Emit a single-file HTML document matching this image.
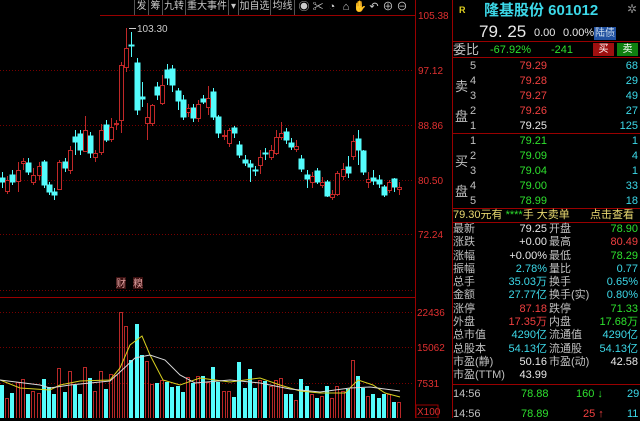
<!DOCTYPE html>
<html><head><meta charset="utf-8"><style>
*{margin:0;padding:0;box-sizing:border-box}
body{width:640px;height:418px;background:#000;overflow:hidden;position:relative;font-family:"Liberation Sans","Noto Sans CJK SC",sans-serif;font-size:12px;color:#c0c0c0}
.a{position:absolute;white-space:nowrap;line-height:13px}
.r{text-align:right}
.cy{color:#3cd8e8}.gr{color:#2ee02e}.rd{color:#f04040}.wh{color:#e8e8e8}.gy{color:#c0c0c0}
.tb{position:absolute;top:0;height:15px;line-height:14px;font-size:10px;color:#c8c8c8;border-right:1px solid #555;text-align:center;overflow:hidden}
.ic{position:absolute;top:1px;width:14px;text-align:center;font-size:11px;color:#ccc;line-height:13px}
</style></head><body>
<svg width="640" height="418" style="position:absolute;left:0;top:0">
<g stroke="#700" stroke-width="1" stroke-dasharray="1,2">
<line x1="0" y1="70.5" x2="414" y2="70.5"/><line x1="0" y1="125.5" x2="414" y2="125.5"/><line x1="0" y1="180.5" x2="414" y2="180.5"/><line x1="0" y1="234.5" x2="414" y2="234.5"/><line x1="0" y1="290.5" x2="414" y2="290.5"/>
<line x1="0" y1="312.5" x2="414" y2="312.5"/><line x1="0" y1="347.5" x2="414" y2="347.5"/><line x1="0" y1="383.5" x2="414" y2="383.5"/>
</g>
<line x1="0" y1="297.5" x2="415" y2="297.5" stroke="#900"/>
<line x1="100" y1="15.5" x2="415" y2="15.5" stroke="#900"/>
<line x1="415.5" y1="0" x2="415.5" y2="418" stroke="#900"/>
<line x1="452.5" y1="0" x2="452.5" y2="418" stroke="#900"/>
<g font-size="10" fill="#e03030" font-family="Liberation Sans">
<text x="418" y="19">105.38</text><text x="418" y="74">97.12</text><text x="418" y="129">88.86</text><text x="418" y="184">80.50</text><text x="418" y="238">72.24</text>
<text x="417" y="316">22436</text><text x="417" y="351">15062</text><text x="417" y="387">7531</text><text x="417" y="415">X100</text>
</g>
<rect x="416" y="405" width="22" height="13" fill="none" stroke="#900"/>
<line x1="129" y1="28.5" x2="136" y2="28.5" stroke="#ccc"/>
<text x="137" y="32" font-size="10" fill="#ccc" font-family="Liberation Sans">103.30</text>
<g stroke="#54fcfc" fill="#54fcfc">
<path d="M2.5 172V188M12.5 170V185M28.5 158V175M44.5 160V188M49.5 182V195M54.5 188V200M65.5 158V172M75.5 130V155M80.5 130V155M90.5 132V158M106.5 120V142M131.5 32V57M137.5 58V115M142.5 82V107M157.5 82V100M167.5 64V85M172.5 65V92M178.5 88V110M183.5 95V120M193.5 104V122M203.5 95V104M213.5 88V120M218.5 115V138M234.5 126V138M239.5 141V158M245.5 155V166M250.5 160V182M255.5 166V176M265.5 148V160M286.5 128V144M291.5 138V150M301.5 155V172M307.5 170V188M317.5 168V184M327.5 180V197M348.5 156V178M358.5 130V165M363.5 150V175M373.5 170V185M379.5 175V188M384.5 185V197M394.5 178V192" fill="none"/>
<rect x="0" y="178" width="5" height="4"/><rect x="10" y="175" width="5" height="7"/><rect x="26" y="163" width="5" height="9"/><rect x="42" y="162" width="5" height="23"/><rect x="47" y="185" width="5" height="7"/><rect x="52" y="192" width="5" height="3"/><rect x="63" y="162" width="5" height="6"/><rect x="73" y="137" width="5" height="5"/><rect x="78" y="134" width="5" height="16"/><rect x="88" y="136" width="5" height="17"/><rect x="104" y="125" width="5" height="15"/><rect x="129" y="45" width="5" height="1"/><rect x="135" y="63" width="5" height="47"/><rect x="140" y="97" width="5" height="2"/><rect x="155" y="87" width="5" height="8"/><rect x="165" y="70" width="5" height="8"/><rect x="170" y="69" width="5" height="16"/><rect x="176" y="91" width="5" height="10"/><rect x="181" y="100" width="5" height="17"/><rect x="191" y="108" width="5" height="10"/><rect x="201" y="99" width="5" height="3"/><rect x="211" y="92" width="5" height="25"/><rect x="216" y="117" width="5" height="16"/><rect x="232" y="128" width="5" height="5"/><rect x="237" y="145" width="5" height="10"/><rect x="243" y="160" width="5" height="3"/><rect x="248" y="164" width="5" height="3"/><rect x="253" y="170" width="5" height="1"/><rect x="263" y="153" width="5" height="1"/><rect x="284" y="132" width="5" height="8"/><rect x="289" y="143" width="5" height="4"/><rect x="299" y="159" width="5" height="10"/><rect x="305" y="175" width="5" height="4"/><rect x="315" y="171" width="5" height="11"/><rect x="325" y="182" width="5" height="14"/><rect x="346" y="167" width="5" height="6"/><rect x="356" y="139" width="5" height="11"/><rect x="361" y="151" width="5" height="21"/><rect x="371" y="178" width="5" height="3"/><rect x="377" y="180" width="5" height="4"/><rect x="382" y="187" width="5" height="8"/><rect x="392" y="179" width="5" height="8"/>
</g>
<g stroke="#c02828" fill="#000">
<path d="M7.5 176V194M18.5 162V192M23.5 158V170M33.5 168V185M39.5 162V180M59.5 160V190M70.5 146V174M85.5 116V152M95.5 150V162M101.5 124V155M111.5 118V142M116.5 120V130M121.5 62V133M126.5 28V72M147.5 103V140M152.5 104V126M162.5 75V105M188.5 104V117M198.5 100V122M208.5 86V115M224.5 130V140M229.5 128V147M260.5 150V174M271.5 145V160M276.5 130V155M281.5 122V140M296.5 140V152M312.5 172V188M322.5 177V188M332.5 190V200M337.5 171V196M343.5 163V180M353.5 135V160M368.5 172V188M389.5 180V193M399.5 182V195" fill="none"/>
<rect x="5.5" y="180.5" width="4" height="11"/><rect x="16.5" y="170.5" width="4" height="11"/><rect x="21.5" y="161.5" width="4" height="2"/><rect x="31.5" y="175.5" width="4" height="7"/><rect x="37.5" y="166.5" width="4" height="9"/><rect x="57.5" y="162.5" width="4" height="27"/><rect x="68.5" y="150.5" width="4" height="20"/><rect x="83.5" y="130.5" width="4" height="21"/><rect x="93.5" y="153.5" width="4" height="4"/><rect x="99.5" y="130.5" width="4" height="22"/><rect x="109.5" y="127.5" width="4" height="12"/><rect x="114.5" y="123.5" width="4" height="1"/><rect x="119.5" y="65.5" width="4" height="55"/><rect x="124.5" y="48.5" width="4" height="19"/><rect x="145.5" y="117.5" width="4" height="6"/><rect x="150.5" y="105.5" width="4" height="18"/><rect x="160.5" y="85.5" width="4" height="18"/><rect x="186.5" y="108.5" width="4" height="4"/><rect x="196.5" y="104.5" width="4" height="14"/><rect x="206.5" y="98.5" width="4" height="9"/><rect x="222.5" y="135.5" width="4" height="1"/><rect x="227.5" y="130.5" width="4" height="13"/><rect x="258.5" y="157.5" width="4" height="8"/><rect x="269.5" y="150.5" width="4" height="7"/><rect x="274.5" y="137.5" width="4" height="16"/><rect x="279.5" y="133.5" width="4" height="4"/><rect x="294.5" y="146.5" width="4" height="3"/><rect x="310.5" y="176.5" width="4" height="6"/><rect x="320.5" y="182.5" width="4" height="3"/><rect x="330.5" y="194.5" width="4" height="3"/><rect x="335.5" y="173.5" width="4" height="21"/><rect x="341.5" y="169.5" width="4" height="7"/><rect x="351.5" y="141.5" width="4" height="15"/><rect x="366.5" y="179.5" width="4" height="3"/><rect x="387.5" y="182.5" width="4" height="8"/><rect x="397.5" y="187.5" width="4" height="2"/>
</g>
<rect x="116" y="277" width="10" height="12" fill="#3a1010"/><rect x="133" y="277" width="10" height="12" fill="#3a1010"/>
<text x="116" y="287" font-size="10" fill="#e0a0a0" font-family="Noto Sans CJK SC">财</text><text x="133" y="287" font-size="10" fill="#e0a0a0" font-family="Noto Sans CJK SC">糗</text>
<g fill="#54fcfc">
<rect x="0" y="385" width="4" height="33"/><rect x="10" y="393" width="4" height="25"/><rect x="26" y="394" width="4" height="24"/><rect x="42" y="379" width="4" height="39"/><rect x="47" y="387" width="4" height="31"/><rect x="52" y="394" width="4" height="24"/><rect x="63" y="392" width="4" height="26"/><rect x="73" y="385" width="4" height="33"/><rect x="78" y="394" width="4" height="24"/><rect x="88" y="378" width="4" height="40"/><rect x="104" y="389" width="4" height="29"/><rect x="129" y="360" width="4" height="58"/><rect x="135" y="324" width="4" height="94"/><rect x="140" y="355" width="4" height="63"/><rect x="155" y="383" width="4" height="35"/><rect x="165" y="382" width="4" height="36"/><rect x="170" y="387" width="4" height="31"/><rect x="176" y="386" width="4" height="32"/><rect x="181" y="392" width="4" height="26"/><rect x="191" y="383" width="4" height="35"/><rect x="201" y="376" width="4" height="42"/><rect x="211" y="367" width="4" height="51"/><rect x="216" y="382" width="4" height="36"/><rect x="232" y="397" width="4" height="21"/><rect x="237" y="362" width="4" height="56"/><rect x="243" y="388" width="4" height="30"/><rect x="248" y="369" width="4" height="49"/><rect x="253" y="388" width="4" height="30"/><rect x="263" y="381" width="4" height="37"/><rect x="284" y="394" width="4" height="24"/><rect x="289" y="394" width="4" height="24"/><rect x="299" y="379" width="4" height="39"/><rect x="305" y="386" width="4" height="32"/><rect x="315" y="398" width="4" height="20"/><rect x="325" y="386" width="4" height="32"/><rect x="346" y="389" width="4" height="29"/><rect x="356" y="376" width="4" height="42"/><rect x="361" y="388" width="4" height="30"/><rect x="371" y="394" width="4" height="24"/><rect x="377" y="398" width="4" height="20"/><rect x="382" y="394" width="4" height="24"/><rect x="392" y="402" width="4" height="16"/>
</g>
<g stroke="#b82828" fill="none">
<rect x="5.5" y="398.5" width="3" height="20"/><rect x="16.5" y="382.5" width="3" height="36"/><rect x="21.5" y="379.5" width="3" height="39"/><rect x="31.5" y="391.5" width="3" height="27"/><rect x="37.5" y="393.5" width="3" height="25"/><rect x="57.5" y="368.5" width="3" height="50"/><rect x="68.5" y="371.5" width="3" height="47"/><rect x="83.5" y="367.5" width="3" height="51"/><rect x="93.5" y="391.5" width="3" height="27"/><rect x="99.5" y="371.5" width="3" height="47"/><rect x="109.5" y="374.5" width="3" height="44"/><rect x="114.5" y="375.5" width="3" height="43"/><rect x="119.5" y="312.5" width="3" height="106"/><rect x="124.5" y="326.5" width="3" height="92"/><rect x="145.5" y="361.5" width="3" height="57"/><rect x="150.5" y="384.5" width="3" height="34"/><rect x="160.5" y="380.5" width="3" height="38"/><rect x="186.5" y="377.5" width="3" height="41"/><rect x="196.5" y="376.5" width="3" height="42"/><rect x="206.5" y="382.5" width="3" height="36"/><rect x="222.5" y="391.5" width="3" height="27"/><rect x="227.5" y="391.5" width="3" height="27"/><rect x="258.5" y="380.5" width="3" height="38"/><rect x="269.5" y="386.5" width="3" height="32"/><rect x="274.5" y="380.5" width="3" height="38"/><rect x="279.5" y="378.5" width="3" height="40"/><rect x="294.5" y="400.5" width="3" height="18"/><rect x="310.5" y="394.5" width="3" height="24"/><rect x="320.5" y="396.5" width="3" height="22"/><rect x="330.5" y="398.5" width="3" height="20"/><rect x="335.5" y="386.5" width="3" height="32"/><rect x="341.5" y="391.5" width="3" height="27"/><rect x="351.5" y="360.5" width="3" height="58"/><rect x="366.5" y="396.5" width="3" height="22"/><rect x="387.5" y="394.5" width="3" height="24"/><rect x="397.5" y="402.5" width="3" height="16"/>
</g>
<polyline fill="none" stroke="#d8d020" stroke-width="1" points="0,380 20,388 50,390 60,385 80,381 110,380 120,368 130,345 142,336 150,355 163,380 180,385 200,378 230,382 245,380 260,378 280,385 300,391 320,393 345,393 358,380 373,385 385,393 400,397"/>
<polyline fill="none" stroke="#d8d8d8" stroke-width="1" points="0,380 40,385 50,388 70,385 110,381 120,372 135,358 150,355 165,360 180,375 195,383 230,380 260,383 290,389 320,392 350,388 370,387 400,391"/>
</svg>
<div class="tb" style="left:134px;width:15px;border-left:1px solid #555">发</div>
<div class="tb" style="left:149px;width:14px">筹</div>
<div class="tb" style="left:163px;width:23px">九转</div>
<div class="tb" style="left:186px;width:43px">重大事件</div>
<div class="tb" style="left:229px;width:10px">▾</div>
<div class="tb" style="left:239px;width:32px">加自选</div>
<div class="tb" style="left:271px;width:24px">均线</div>
<div class="ic" style="left:297px">◉</div>
<div class="ic" style="left:311px">✂</div>
<div class="ic" style="left:325px">◔</div>
<div class="ic" style="left:339px">⌂</div>
<div class="ic" style="left:353px">✋</div>
<div class="ic" style="left:367px">↶</div>
<div class="ic" style="left:381px">⊕</div>
<div class="ic" style="left:395px">⊖</div>
<div class="a" style="left:459px;top:4px;font-size:9px;color:#e0d020;font-weight:bold">R</div>
<div class="a cy" style="left:484px;top:2px;font-size:15px;line-height:17px;font-weight:bold">隆基股份 601012</div>
<div class="a" style="left:627px;top:3px;color:#888;font-size:12px">✲</div>
<div class="a wh" style="left:479px;top:22px;font-size:17px;line-height:19px">79. 25</div>
<div class="a wh" style="left:534px;top:27px;font-size:11px">0.00</div>
<div class="a wh" style="left:563px;top:27px;font-size:11px">0.00%</div>
<div class="a" style="left:594px;top:27px;font-size:10px;background:#2050a0;color:#cde;padding:0 1px">陆债</div>
<div style="position:absolute;left:453px;top:41px;width:187px;height:1px;background:#900"></div>
<div class="a gy" style="left:453px;top:43px;font-size:13px">委比</div>
<div class="a gr" style="left:490px;top:44px;font-size:11px">-67.92%</div>
<div class="a gr" style="left:551px;top:44px;font-size:11px">-241</div>
<div class="a" style="left:593px;top:43px;width:21px;height:13px;background:#a01010;color:#fff;font-size:10px;text-align:center">买</div>
<div class="a" style="left:617px;top:43px;width:21px;height:13px;background:#108010;color:#fff;font-size:10px;text-align:center">卖</div>
<div style="position:absolute;left:453px;top:57px;width:187px;height:1px;background:#900"></div>
<div class="a gy" style="left:455px;top:72px;font-size:13px;line-height:30px">卖<br>盘</div>
<div class="a gy" style="left:455px;top:147px;font-size:13px;line-height:30px">买<br>盘</div>
<div class="a gy" style="left:470px;top:59px;font-size:11px;line-height:15px">5<br>4<br>3<br>2<br>1</div>
<div class="a r" style="left:490px;top:59px;width:57px;font-size:11px;line-height:15px"><span class="rd">79.29<br>79.28<br>79.27<br>79.26</span><br><span class="wh">79.25</span></div>
<div class="a r cy" style="left:590px;top:59px;width:48px;font-size:11px;line-height:15px">68<br>29<br>49<br>27<br>125</div>
<div style="position:absolute;left:453px;top:133px;width:187px;height:1px;background:#900"></div>
<div class="a gy" style="left:470px;top:134px;font-size:11px;line-height:15px">1<br>2<br>3<br>4<br>5</div>
<div class="a r gr" style="left:490px;top:134px;width:57px;font-size:11px;line-height:15px">79.21<br>79.09<br>79.04<br>79.00<br>78.99</div>
<div class="a r cy" style="left:590px;top:134px;width:48px;font-size:11px;line-height:15px">1<br>4<br>1<br>33<br>18</div>
<div style="position:absolute;left:453px;top:208px;width:187px;height:1px;background:#900"></div>
<div class="a" style="left:453px;top:209px;font-size:11px;color:#e8d870">79.30元有 <span class="gr">****</span>手 大卖单</div>
<div class="a" style="left:590px;top:209px;font-size:11px;color:#e8d870">点击查看</div>
<div style="position:absolute;left:453px;top:222px;width:187px;height:1px;background:#900"></div>
<div class="a gy" style="left:453px;top:223px;font-size:11px;line-height:13.3px">最新<br>涨跌<br>涨幅<br>振幅<br>总手<br>金额<br>涨停<br>外盘<br>总市值<br>总股本<br>市盈(静)<br>市盈(TTM)</div>
<div class="a r" style="left:480px;top:223px;width:67px;font-size:11px;line-height:13.3px"><span class="wh">79.25<br>+0.00<br>+0.00%</span><br><span class="cy">2.78%<br>35.03万<br>27.77亿</span><br><span class="rd">87.18<br>17.35万</span><br><span class="cy">4290亿<br>54.13亿</span><br><span class="wh">50.16<br>43.99</span></div>
<div class="a gy" style="left:549px;top:223px;font-size:11px;line-height:13.3px">开盘<br>最高<br>最低<br>量比<br>换手<br>换手(实)<br>跌停<br>内盘<br>流通值<br>流通股<br>市盈(动)</div>
<div class="a r" style="left:580px;top:223px;width:58px;font-size:11px;line-height:13.3px"><span class="gr">78.90</span><br><span class="rd">80.49</span><br><span class="gr">78.29</span><br><span class="cy">0.77<br>0.65%<br>0.80%</span><br><span class="gr">71.33<br>17.68万</span><br><span class="cy">4290亿<br>54.13亿</span><br><span class="wh">42.58</span></div>
<div style="position:absolute;left:453px;top:384px;width:187px;height:1px;background:#900"></div>
<div class="a gy" style="left:453px;top:388px;font-size:11px">14:56</div>
<div class="a gr" style="left:521px;top:388px;font-size:11px">78.88</div>
<div class="a gr" style="left:576px;top:388px;font-size:11px">160 ↓</div>
<div class="a cy" style="left:627px;top:388px;font-size:11px">29</div>
<div class="a gy" style="left:453px;top:408px;font-size:11px">14:56</div>
<div class="a gr" style="left:521px;top:408px;font-size:11px">78.89</div>
<div class="a rd" style="left:583px;top:408px;font-size:11px">25 ↑</div>
<div class="a cy" style="left:627px;top:408px;font-size:11px">11</div>
</body></html>
